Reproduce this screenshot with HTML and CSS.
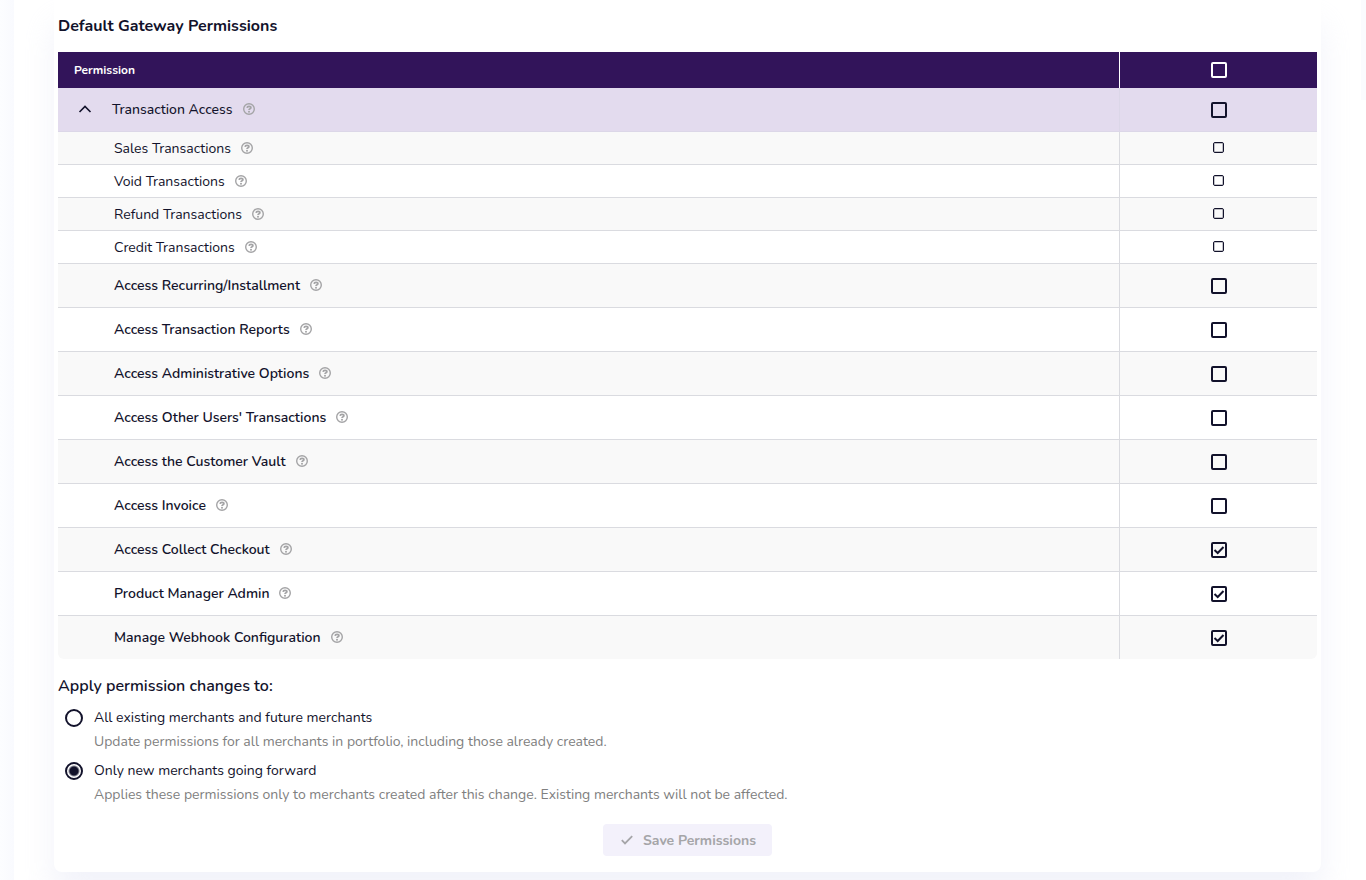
FILE: index.html
```html
<!DOCTYPE html>
<html lang="en">
<head>
<meta charset="utf-8">
<title>Default Gateway Permissions</title>
<link rel="stylesheet" href="styles.css">
</head>
<body>
<svg class="sprite" aria-hidden="true">
  <symbol id="help" viewBox="0 0 12 14">
    <circle cx="6" cy="6" r="5.300" fill="none" stroke="currentColor" stroke-width="1.400"/>
    <path d="M4.100 4.900C4.200 3.700 5 3.300 6 3.300c1.100 0 1.900.5 1.900 1.400C7.900 5.700 6 5.700 6 7" fill="none" stroke="currentColor" stroke-width="1.700"/>
    <circle cx="6" cy="8.700" r="1" fill="currentColor"/>
  </symbol>
</svg>
<div class="page">
  <main class="panel">
    <form class="card">
      <h2 class="title">Default Gateway Permissions</h2>
      <table class="permissions">
        <thead>
          <tr><th scope="col">Permission</th><th scope="col" class="pick"><input class="check" type="checkbox" aria-label="Select all permissions"></th></tr>
        </thead>
        <tbody>
          <tr class="group"><td><div class="cell"><button type="button" class="toggle" aria-label="Collapse Transaction Access"><svg class="chevron" viewBox="0 0 14 10"><path d="M1.500 7 7 1.500 12.500 7" fill="none" stroke="currentColor" stroke-width="1.600"/></svg></button><label for="p0">Transaction Access</label><svg class="help"><use href="#help"/></svg></div></td><td class="pick"><input class="check" type="checkbox" id="p0"></td></tr>
          <tr class="sub"><td><div class="cell"><label for="p1">Sales Transactions</label><svg class="help"><use href="#help"/></svg></div></td><td class="pick"><input class="check" type="checkbox" id="p1"></td></tr>
          <tr class="sub"><td><div class="cell"><label for="p2">Void Transactions</label><svg class="help"><use href="#help"/></svg></div></td><td class="pick"><input class="check" type="checkbox" id="p2"></td></tr>
          <tr class="sub"><td><div class="cell"><label for="p3">Refund Transactions</label><svg class="help"><use href="#help"/></svg></div></td><td class="pick"><input class="check" type="checkbox" id="p3"></td></tr>
          <tr class="sub"><td><div class="cell"><label for="p4">Credit Transactions</label><svg class="help"><use href="#help"/></svg></div></td><td class="pick"><input class="check" type="checkbox" id="p4"></td></tr>
          <tr><td><div class="cell"><label for="p5">Access Recurring/Installment</label><svg class="help"><use href="#help"/></svg></div></td><td class="pick"><input class="check" type="checkbox" id="p5"></td></tr>
          <tr><td><div class="cell"><label for="p6">Access Transaction Reports</label><svg class="help"><use href="#help"/></svg></div></td><td class="pick"><input class="check" type="checkbox" id="p6"></td></tr>
          <tr><td><div class="cell"><label for="p7">Access Administrative Options</label><svg class="help"><use href="#help"/></svg></div></td><td class="pick"><input class="check" type="checkbox" id="p7"></td></tr>
          <tr><td><div class="cell"><label for="p8">Access Other Users' Transactions</label><svg class="help"><use href="#help"/></svg></div></td><td class="pick"><input class="check" type="checkbox" id="p8"></td></tr>
          <tr><td><div class="cell"><label for="p9">Access the Customer Vault</label><svg class="help"><use href="#help"/></svg></div></td><td class="pick"><input class="check" type="checkbox" id="p9"></td></tr>
          <tr><td><div class="cell"><label for="p10">Access Invoice</label><svg class="help"><use href="#help"/></svg></div></td><td class="pick"><input class="check" type="checkbox" id="p10"></td></tr>
          <tr><td><div class="cell"><label for="p11">Access Collect Checkout</label><svg class="help"><use href="#help"/></svg></div></td><td class="pick"><input class="check" type="checkbox" id="p11" checked></td></tr>
          <tr><td><div class="cell"><label for="p12">Product Manager Admin</label><svg class="help"><use href="#help"/></svg></div></td><td class="pick"><input class="check" type="checkbox" id="p12" checked></td></tr>
          <tr><td><div class="cell"><label for="p13">Manage Webhook Configuration</label><svg class="help"><use href="#help"/></svg></div></td><td class="pick"><input class="check" type="checkbox" id="p13" checked></td></tr>
        </tbody>
      </table>
      <fieldset class="scope">
        <legend class="scope-title">Apply permission changes to:</legend>
        <div class="option">
          <input class="radio" type="radio" name="scope" id="all" aria-describedby="all-note">
          <label for="all">All existing merchants and future merchants</label>
          <p class="note" id="all-note">Update permissions for all merchants in portfolio, including those already created.</p>
        </div>
        <div class="option">
          <input class="radio" type="radio" name="scope" id="new" aria-describedby="new-note" checked>
          <label for="new">Only new merchants going forward</label>
          <p class="note" id="new-note">Applies these permissions only to merchants created after this change. Existing merchants will not be affected.</p>
        </div>
      </fieldset>
      <div class="actions">
        <button class="save" type="submit" disabled><svg class="tick" viewBox="0 0 12 12"><path d="M.8 5.200 4 8.400 11.200 1.200" fill="none" stroke="currentColor" stroke-width="1.800"/></svg>Save Permissions</button>
      </div>
    </form>
  </main>
</div>
</body>
</html>
```
FILE: styles.css
```css
* { box-sizing: border-box; }

body {
  margin: 0;
  background: #fff;
  color: #12122b;
  font: 14px/20px Nunito, "Open Sans", sans-serif;
}

.sprite { display: none; }

.page {
  padding: 0 5px 0 14px;
  background:
    linear-gradient(#fafbfe, #fafbfe) right top / 5px 100px no-repeat,
    linear-gradient(to right, #fcfdff, #f9fafe 14px, #fff 14px);
}

.panel { padding: 0 40px 8px; overflow: hidden; }

.card {
  padding: 12px 4px 16px;
  border-radius: 0 0 8px 8px;
  background: #fff;
  box-shadow: 0 24px 32px #dfe2f266;
}

.title {
  margin: 0 0 12px;
  font-size: 16px;
  line-height: 28px;
  font-weight: 700;
}

.permissions { width: 100%; border-spacing: 0; }

th {
  height: 36px;
  padding: 0 16px;
  background: #32145a;
  color: #fff;
  font-size: 12px;
  line-height: 16px;
  font-weight: 700;
  text-align: left;
}

td {
  height: 44px;
  padding: 0 16px 0 56px;
  border-bottom: 1px solid #dadbe0;
}

.pick {
  width: 198px;
  padding: 0;
  border-left: 1px solid #dadbe0;
  text-align: center;
}

th.pick { border-left-color: #fff; }

.cell { display: flex; align-items: center; gap: 10px; font-weight: 600; }

tbody tr:nth-child(even) { background: #f9f9f9; }
.group { background: #e3dbee; }
.group td { padding-left: 20px; border-color: #dcd7e8; }
.group .pick, .sub .pick { padding: 0; }
.group .cell { font-weight: 500; }
.sub td { height: 33px; padding-top: 1px; }
.sub .cell { font-weight: 400; }

tbody tr:last-child td { height: 43px; border-bottom: 0; }
tbody tr:last-child td:first-child { border-bottom-left-radius: 6px; }
tbody tr:last-child td:last-child { border-bottom-right-radius: 6px; }
tbody tr:last-child { background: none; }
tbody tr:last-child td { background: #f9f9f9; }

.toggle {
  display: flex;
  width: 24px;
  padding: 0;
  border: 0;
  background: none;
  color: inherit;
}

.chevron { width: 14px; height: 10px; }
.help { flex: none; width: 12px; height: 14px; color: #a4a4a6; }

.check {
  appearance: none;
  display: block;
  width: 16px;
  height: 16px;
  margin: 0 auto;
  border: 2px solid currentColor;
  border-radius: 2px;
  color: #12122b;
}

th .check { color: #fff; }

.check:checked {
  background: url("data:image/svg+xml,%3Csvg xmlns='http://www.w3.org/2000/svg' viewBox='0 0 12 12'%3E%3Cpath d='M1.500 6 4.700 9 10.500 3' fill='none' stroke='%2312122b' stroke-width='2'/%3E%3C/svg%3E") center / 12px 12px no-repeat;
}

.sub .pick { padding-bottom: 1px; }
.sub .check {
  width: 11px;
  height: 11px;
  border-width: 1px;
  box-shadow: inset 0 0 0 1px #12122b40;
}

.scope { margin: 16px 0 0; padding: 0; border: 0; }
.scope-title { padding: 0; font-size: 16px; line-height: 22px; font-weight: 600; }

.option {
  display: grid;
  grid-template-columns: 18px 1fr;
  column-gap: 11px;
  row-gap: 4px;
  align-items: center;
  padding: 0 7px;
  margin-top: 11px;
}

.option + .option { margin-top: 9px; }

.radio {
  appearance: none;
  width: 18px;
  height: 18px;
  margin: 0;
  border: 2px solid #12122b;
  border-radius: 50%;
}

.radio:checked { background: radial-gradient(circle, #12122b 4px, #0000 6px); }
.note { grid-column: 2; margin: 0; color: #808080; }

.actions { display: flex; justify-content: center; margin-top: 19px; }

.save {
  display: flex;
  align-items: center;
  gap: 10px;
  height: 32px;
  padding: 1px 16px 0 18px;
  border: 0;
  border-radius: 4px;
  background: #f3f1fb;
  color: #a5a5a8;
  font: inherit;
  font-weight: 700;
}

.tick { width: 12px; height: 12px; }
```
